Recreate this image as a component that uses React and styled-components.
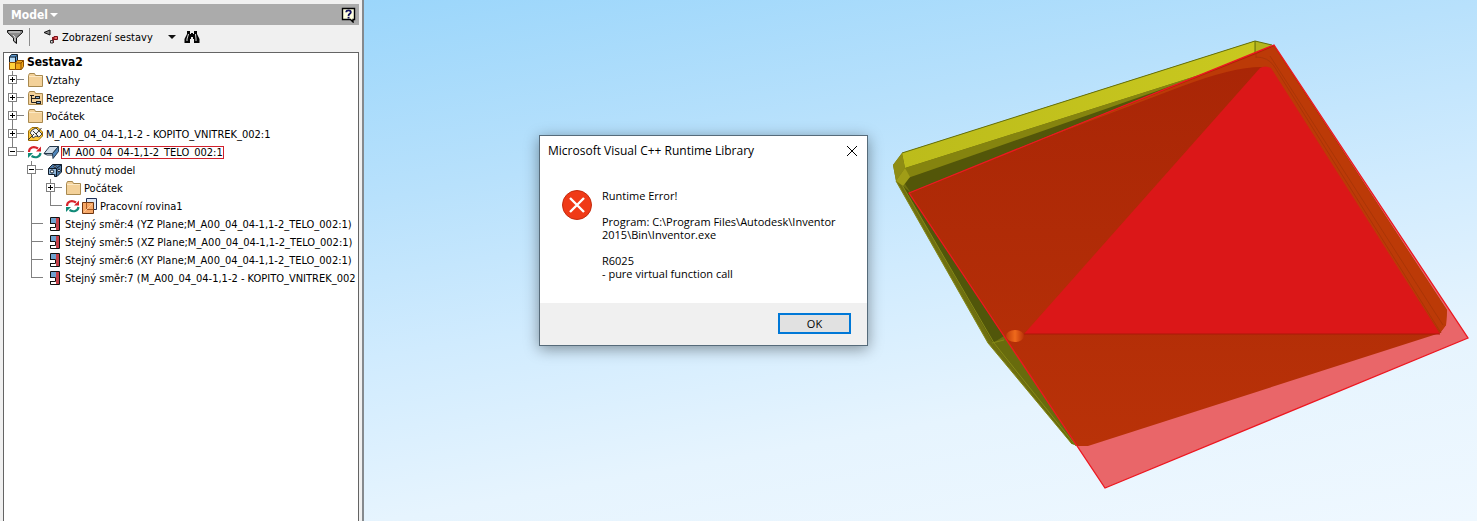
import React from "react";
import styled, { createGlobalStyle } from "styled-components";

const App = () => {
  return (
    <>
      <GlobalStyle />
      <Layout>
        <BrowserPanel />
        <Viewport>
          <Scene />
          <ErrorDialog />
        </Viewport>
      </Layout>
    </>
  );
};

export default App;

const FOLDER_PATH =
  "M1.5 3.5 L2.5 1.5 H7.5 L8.5 3.5 H15.5 V14.5 H1.5 Z";

const FolderIcon = () => (
  <Icon viewBox="0 0 16 16">
    <path d={FOLDER_PATH} fill="#f3d199" stroke="#a8894f" />
    <path d="M2 4.5H15" stroke="#fbe8c4" />
  </Icon>
);

const RepresentationIcon = () => (
  <Icon viewBox="0 0 16 16">
    <path d={FOLDER_PATH} fill="#f3d199" stroke="#a8894f" />
    <path d="M3 5.5H7 M4.5 5V12.5H9 M4.5 8.5H8" stroke="#222" fill="none" />
    <rect x="8.5" y="6.5" width="4" height="2" fill="#8ab4d8" stroke="#222" />
    <rect x="9.5" y="11.5" width="4" height="2" fill="#8ab4d8" stroke="#222" />
  </Icon>
);

const AssemblyIcon = () => (
  <Icon viewBox="0 0 16 16">
    <path d="M1.5 3 L3.5 .5 H9.5 V6 L7.5 8 H1.5Z" fill="#5d9bd3" stroke="#14202c" />
    <path d="M2 3.5H7V8H2Z" fill="#b4daf5" />
    <path d="M1.5 3H7.5V8 M7.5 3L9.5 1" stroke="#14202c" fill="none" />
    <path d="M1.5 8.5H7.5V15.5H1.5Z" fill="#ffd23c" stroke="#8a4b00" />
    <path d="M7.5 8.5L9.5 6.5H15.5V12.5L13.5 15.5H7.5Z" fill="#f0a818" stroke="#8a4b00" />
    <path d="M7.5 9H13V15 M13 9L15.5 6.5" stroke="#8a4b00" fill="none" />
  </Icon>
);

const PinnedPartIcon = () => (
  <Icon viewBox="0 0 16 16">
    <path d="M1.5 5L5 1.5H11L15.5 6V10L11 14.5H1.5Z" fill="#ffc93c" stroke="#9c6a00" />
    <path d="M5 4L9 2L15 8L12 11L9 10L6 12L5 9L3 7Z" fill="#f4f4f4" stroke="#444" />
    <path d="M1 14L7 8 M6 5L11 10 M14.5 2L9 8" stroke="#333" />
  </Icon>
);

const UpdateIcon = () => (
  <Icon viewBox="0 0 16 16">
    <path d="M2 8C2 3.5 6.5 1.5 11 4.5" stroke="#d8232a" strokeWidth="2.2" fill="none" />
    <path d="M14 2.5V7.5H9Z" fill="#d8232a" />
    <path d="M13.5 9C13 13 8.5 14.5 4.5 12" stroke="#118a78" strokeWidth="2.2" fill="none" />
    <path d="M1 14V9H6Z" fill="#118a78" />
  </Icon>
);

const SheetMetalIcon = () => (
  <Icon viewBox="0 0 16 16">
    <path d="M6.5 2.5H15.5L9.5 9.5H1Z" fill="#cfdce8" stroke="#24384c" />
    <path d="M15.5 2.5V7.5L10 14.5L9.5 9.5Z" fill="#4f86bb" stroke="#24384c" />
    <path d="M1 9.5L4 11H9.8" stroke="#24384c" fill="none" />
  </Icon>
);

const FoldedModelIcon = () => (
  <Icon viewBox="0 0 16 16">
    <path d="M2.5 6.5L6.5 2.5H15.5V10L11 14.5H8.5V12.5H2.5Z" fill="#4d79a6" stroke="#101c2a" />
    <path d="M3 7H10V12H3Z" fill="#93b8da" />
    <path d="M2.5 6.5H10.5V14.5 M10.5 6.5L15.5 2.5" stroke="#101c2a" fill="none" />
    <circle cx="6" cy="9.5" r="1.6" fill="#fff" stroke="#101c2a" />
    <circle cx="9" cy="4.5" r="1" fill="#fff" stroke="#101c2a" />
    <circle cx="13" cy="8.5" r="1.3" fill="#fff" stroke="#101c2a" />
  </Icon>
);

const WorkPlaneIcon = () => (
  <Icon viewBox="0 0 16 16">
    <path d="M5.5 .5H15.5V11.5H5.5Z" fill="#dfe8f6" stroke="#1f2f55" />
    <path d="M1.5 4.5H12.5V15.5H1.5Z" fill="#f6a868" stroke="#6e3510" />
    <path d="M5.5 4.5V11.5H12.5" stroke="#a85a24" fill="none" />
    <path d="M3 14L11 6" stroke="#fbc795" />
  </Icon>
);

const FlushIcon = () => (
  <Icon viewBox="0 0 16 16">
    <path d="M4.5 1.5H13.5V14.5H4.5Z" fill="#fff" stroke="#111" />
    <path d="M5 2H10V7H5Z" fill="#6fa3cf" />
    <path d="M10 2H13V14H10Z" fill="#c5404a" />
    <path d="M4 7.5H9.5V11.5H5" stroke="#111" fill="none" />
    <path d="M4.5 8V11" stroke="#fff" />
  </Icon>
);

const FilterIcon = () => (
  <Icon viewBox="0 0 16 16">
    <path d="M.5 1.5H15.5V3.5L9.5 9V14.5L6.5 12V9L.5 3.5Z" fill="#8b8b8b" stroke="#111" />
    <path d="M2 3H13" stroke="#ddd" />
    <path d="M6 6L8 8V12" stroke="#ddd" fill="none" />
  </Icon>
);

const ViewIcon = () => (
  <Icon viewBox="0 0 16 16">
    <path d="M1 3.5L7 1V6Z" fill="#888" stroke="#111" />
    <rect x="9" y="8" width="2" height="6" fill="#8b1c24" />
    <path d="M11 7.5H14.5V10.5H11Z" fill="#e66" stroke="#7a1018" />
    <path d="M7.5 11.5H10V14H7.5Z" fill="#ddd" stroke="#333" />
  </Icon>
);

const BinocularsIcon = () => (
  <Icon viewBox="0 0 16 16">
    <path
      d="M3 2H6V5H7V4H9V5H10V2H13V5L15.5 10V14H10V10H9V8H7V10H6V14H.5V10L3 5Z"
      fill="#050505"
    />
    <path d="M4.5 5L3 10V12 M11.5 5L12 10V12" stroke="#ddd" fill="none" />
  </Icon>
);

const HelpIcon = () => (
  <Icon viewBox="0 0 16 16">
    <path d="M1.5 1.5H13.5V12.5H12V15L9.5 12.5H1.5Z" fill="#ffffe1" stroke="#000" strokeWidth="1.4" />
    <path d="M5.2 5.2C5.2 2.7 9.8 2.7 9.8 5.2C9.8 7 7.5 6.7 7.5 9" stroke="#12125e" strokeWidth="1.8" fill="none" />
    <rect x="6.6" y="9.8" width="1.9" height="1.7" fill="#12125e" />
  </Icon>
);

const treeRows = [
  { guides: ["more"], toggle: "+", icons: [FolderIcon], label: "Vztahy" },
  { guides: ["more"], toggle: "+", icons: [RepresentationIcon], label: "Reprezentace" },
  { guides: ["more"], toggle: "+", icons: [FolderIcon], label: "Počátek" },
  {
    guides: ["more"],
    toggle: "+",
    icons: [PinnedPartIcon],
    label: "M_A00_04_04-1,1-2 - KOPITO_VNITREK_002:1",
  },
  {
    guides: ["last"],
    toggle: "-",
    icons: [UpdateIcon, SheetMetalIcon],
    label: "M_A00_04_04-1,1-2_TELO_002:1",
    marked: true,
  },
  { guides: ["empty", "more"], toggle: "-", icons: [FoldedModelIcon], label: "Ohnutý model" },
  { guides: ["empty", "line", "more"], toggle: "+", icons: [FolderIcon], label: "Počátek" },
  {
    guides: ["empty", "line", "last"],
    icons: [UpdateIcon, WorkPlaneIcon],
    label: "Pracovní rovina1",
  },
  {
    guides: ["empty", "more"],
    icons: [FlushIcon],
    label: "Stejný směr:4 (YZ Plane;M_A00_04_04-1,1-2_TELO_002:1)",
  },
  {
    guides: ["empty", "more"],
    icons: [FlushIcon],
    label: "Stejný směr:5 (XZ Plane;M_A00_04_04-1,1-2_TELO_002:1)",
  },
  {
    guides: ["empty", "more"],
    icons: [FlushIcon],
    label: "Stejný směr:6 (XY Plane;M_A00_04_04-1,1-2_TELO_002:1)",
  },
  {
    guides: ["empty", "last"],
    icons: [FlushIcon],
    label: "Stejný směr:7 (M_A00_04_04-1,1-2 - KOPITO_VNITREK_002",
  },
];

const Guide = ({ kind, toggle }) => (
  <GuideSvg viewBox="0 0 19 18">
    {kind !== "empty" && (
      <path d={kind === "last" ? "M4.5 0V9" : "M4.5 0V18"} stroke="#808080" />
    )}
    {(kind === "more" || kind === "last") && (
      <path d="M4.5 8.5H16" stroke="#808080" />
    )}
    {toggle && (
      <>
        <rect x=".5" y="4.5" width="8" height="8" fill="#fff" stroke="#808080" />
        <path d={toggle === "+" ? "M2 8.5H7 M4.5 6V11" : "M2 8.5H7"} stroke="#000" />
      </>
    )}
  </GuideSvg>
);

const BrowserPanel = () => (
  <Panel>
    <PanelTitle>
      <TitleButton>
        Model
        <Arrow $color="#fff" />
      </TitleButton>
      <IconButton aria-label="Help">
        <HelpIcon />
      </IconButton>
    </PanelTitle>
    <Toolbar>
      <IconButton aria-label="Filter">
        <FilterIcon />
      </IconButton>
      <Divider />
      <ViewButton>
        <ViewIcon />
        <span>Zobrazení sestavy</span>
        <Arrow $color="#111" />
      </ViewButton>
      <IconButton aria-label="Find">
        <BinocularsIcon />
      </IconButton>
    </Toolbar>
    <Tree>
      <RootRow>
        <AssemblyIcon />
        <Label>Sestava2</Label>
      </RootRow>
      {treeRows.map((row, i) => (
        <Row key={i}>
          {row.guides.map((kind, g) => (
            <Guide
              key={g}
              kind={kind}
              toggle={g === row.guides.length - 1 ? row.toggle : undefined}
            />
          ))}
          {row.icons.map((RowIcon, n) => (
            <RowIcon key={n} />
          ))}
          <Label $marked={row.marked}>{row.label}</Label>
        </Row>
      ))}
    </Tree>
  </Panel>
);

const Scene = () => (
  <SceneSvg viewBox="364 0 1113 521" preserveAspectRatio="xMidYMid slice">
    <defs>
      <linearGradient id="wall" x1="0" y1="0" x2="1" y2="0">
        <stop offset="0" stopColor="#bcbc1b" />
        <stop offset="1" stopColor="#c9c81f" />
      </linearGradient>
      <linearGradient id="floor" x1="0" y1="0" x2="0" y2="1">
        <stop offset="0" stopColor="#a82506" />
        <stop offset="1" stopColor="#b93208" />
      </linearGradient>
      <linearGradient id="hole" x1="0" y1="0" x2="1" y2="0">
        <stop offset="0" stopColor="#c03c08" />
        <stop offset=".5" stopColor="#ef6a1c" />
        <stop offset="1" stopColor="#b93208" />
      </linearGradient>
    </defs>
    {/* tray body */}
    <path
      d="M902 153L1255 41L1270 45L1447 310L1446 325L1440 333L1088 446L1072 444L988 343L896 181L893 165Z"
      fill="#6f7010"
    />
    <path d="M902 153L1255 41L1256 57L905 168Z" fill="url(#wall)" />
    <path d="M1255 41L1272 45L1256 57Z" fill="#b5b51d" />
    <path d="M905 168L1256 57L1262 66L908 178Z" fill="#85840f" />
    <path d="M908 178L1200 76L1000 160L911 193L905 184Z" fill="#535609" />
    <path d="M902 153L893 165L896 181L905 168Z" fill="#8f8d14" />
    <path d="M905 168L896 181L903 186L910 177Z" fill="#a09d17" />
    <path d="M903 186L911 193L1004 336L993 343Z" fill="#51560a" />
    <path d="M993 343L1005 340L1077 446L1072 444Z" fill="#686b0d" />
    <path d="M902 153L1255 41L1272 45M1255 41V54" fill="none" stroke="#65700c" />
    <path d="M896 181L988 343L1072 444M902 185L994 343L1076 446M992 343L1004 340" fill="none" stroke="#858816" />
    {/* work plane laid over the part */}
    <path d="M909 193L1274 45L1468 338L1105 488Z" fill="#e96669" />
    <path d="M909 193L1274 45L1447 310L1446 325L1440 333L1088 446L1077 446Z" fill="url(#floor)" />
    <path d="M1040 140L1256 54L1274 46L1447 310L1446 325L1440 333L1264 67Q1235 66 1180 87Z" fill="#bc3a07" />
    <path d="M1260 68L1024 334H1440L1271 68Q1265 65 1260 68Z" fill="#db1718" />
    <path d="M1024 334H1440" stroke="#aa1908" />
    <path d="M1270 56L1443 325M1256 57Q1268 57 1274 66L1441 333M1256 52V58" fill="none" stroke="#aa3507" />
    <ellipse cx="1015" cy="336" rx="9" ry="6" fill="url(#hole)" />
    <path d="M909 193L1274 45L1468 338L1105 488Z" fill="none" stroke="#ed1720" strokeWidth="1.3" />
  </SceneSvg>
);

const ErrorDialog = () => (
  <Dialog role="alertdialog" aria-labelledby="dialog-title">
    <DialogHeader>
      <DialogTitle id="dialog-title">Microsoft Visual C++ Runtime Library</DialogTitle>
      <CloseButton aria-label="Close">
        <svg width="12" height="12" viewBox="0 0 12 12">
          <path d="M1 1L11 11M11 1L1 11" stroke="#000" />
        </svg>
      </CloseButton>
    </DialogHeader>
    <DialogBody>
      <svg width="32" height="32" viewBox="0 0 32 32">
        <circle cx="16" cy="16" r="14.5" fill="#f03a17" stroke="#c42b0e" />
        <path d="M9 9L23 23M23 9L9 23" stroke="#fff" strokeWidth="2.4" />
      </svg>
      <Message>
        <p>Runtime Error!</p>
        <p>
          Program: C:\Program Files\Autodesk\Inventor
          <br />
          2015\Bin\Inventor.exe
        </p>
        <p>
          R6025
          <br />- pure virtual function call
        </p>
      </Message>
    </DialogBody>
    <DialogFooter>
      <OkButton>OK</OkButton>
    </DialogFooter>
  </Dialog>
);

const GlobalStyle = createGlobalStyle`
  * {
    box-sizing: border-box;
  }
  body {
    margin: 0;
    font-family: "DejaVu Sans Condensed", "DejaVu Sans", sans-serif;
    font-size: 11px;
    color: #000;
  }
  button {
    font: inherit;
    color: inherit;
    border: 0;
    padding: 0;
    background: none;
  }
`;

const Layout = styled.div`
  display: flex;
  min-height: 100vh;
`;

const Panel = styled.aside`
  display: flex;
  flex-direction: column;
  flex: 0 0 364px;
  min-width: 0;
  padding: 4px 3px 0;
  background: #f0f0f0;
  border-right: 2px solid #85898d;
`;

const PanelTitle = styled.div`
  display: flex;
  justify-content: space-between;
  align-items: center;
  height: 21px;
  padding: 0 2px 0 8px;
  background: #ababab;
`;

const Arrow = styled.span`
  border: 4px solid transparent;
  border-top-color: ${(props) => props.$color};
  border-bottom: 0;
`;

const TitleButton = styled.button`
  display: flex;
  align-items: center;
  gap: 2px;
  color: #fff;
  font-size: 12px;
  font-weight: bold;
`;

const IconButton = styled.button`
  display: flex;
`;

const Toolbar = styled.div`
  display: flex;
  align-items: center;
  height: 27px;
  padding: 0 0 3px 4px;
`;

const Divider = styled.span`
  width: 1px;
  height: 18px;
  margin: 0 13px 0 6px;
  background: #8c8c8c;
`;

const ViewButton = styled.button`
  display: flex;
  align-items: center;
  gap: 3px;
  margin-right: 8px;
  span + span {
    margin-left: 12px;
  }
`;

const Tree = styled.div`
  flex: 1;
  overflow: hidden;
  padding-left: 4px;
  background: #fff;
  border: 1px solid #646464;
  border-bottom: 0;
`;

const Row = styled.div`
  display: flex;
  align-items: center;
  height: 18px;
  white-space: nowrap;
`;

const RootRow = styled(Row)`
  font-size: 12px;
  font-weight: bold;
`;

const Label = styled.span`
  padding: 0 1px;
  margin-left: 2px;
  line-height: 13px;
  outline: ${(props) => (props.$marked ? "1px solid #d0202c" : "none")};
  outline-offset: -1px;
`;

const Icon = styled.svg`
  flex: none;
  width: 16px;
  height: 16px;
`;

const GuideSvg = styled.svg`
  flex: none;
  width: 19px;
  height: 18px;
`;

const Viewport = styled.main`
  position: relative;
  flex: 1;
  overflow: hidden;
  background: linear-gradient(
    170deg,
    #9bd6fb 0%,
    #b8e1fc 28%,
    #d0ebfe 50%,
    #e6f4fe 73%,
    #eff8ff 100%
  );
`;

const SceneSvg = styled.svg`
  position: absolute;
  inset: 0;
  width: 100%;
  height: 100%;
`;

const Dialog = styled.section`
  position: absolute;
  top: 135px;
  left: 175px;
  width: 329px;
  background: #fff;
  border: 1px solid #566b7a;
  box-shadow: 0 3px 14px rgba(0, 0, 0, 0.4);
  font-family: "Open Sans", "Noto Sans", sans-serif;
`;

const DialogHeader = styled.header`
  display: flex;
  justify-content: space-between;
  align-items: center;
  height: 29px;
  padding: 0 9px 0 8px;
`;

const DialogTitle = styled.h1`
  margin: 0;
  font-size: 12px;
  font-weight: normal;
`;

const CloseButton = styled.button`
  display: flex;
`;

const DialogBody = styled.div`
  display: flex;
  gap: 9px;
  padding: 24px 21px 23px;
`;

const Message = styled.div`
  line-height: 13px;
  p {
    margin: 0 0 13px;
  }
  p:last-child {
    margin: 0;
  }
`;

const DialogFooter = styled.footer`
  display: flex;
  justify-content: flex-end;
  padding: 10px 16px 11px;
  background: #f0f0f0;
`;

const OkButton = styled.button`
  width: 73px;
  height: 21px;
  background: #e1e1e1;
  border: 2px solid #0078d7;
  line-height: 17px;
`;
